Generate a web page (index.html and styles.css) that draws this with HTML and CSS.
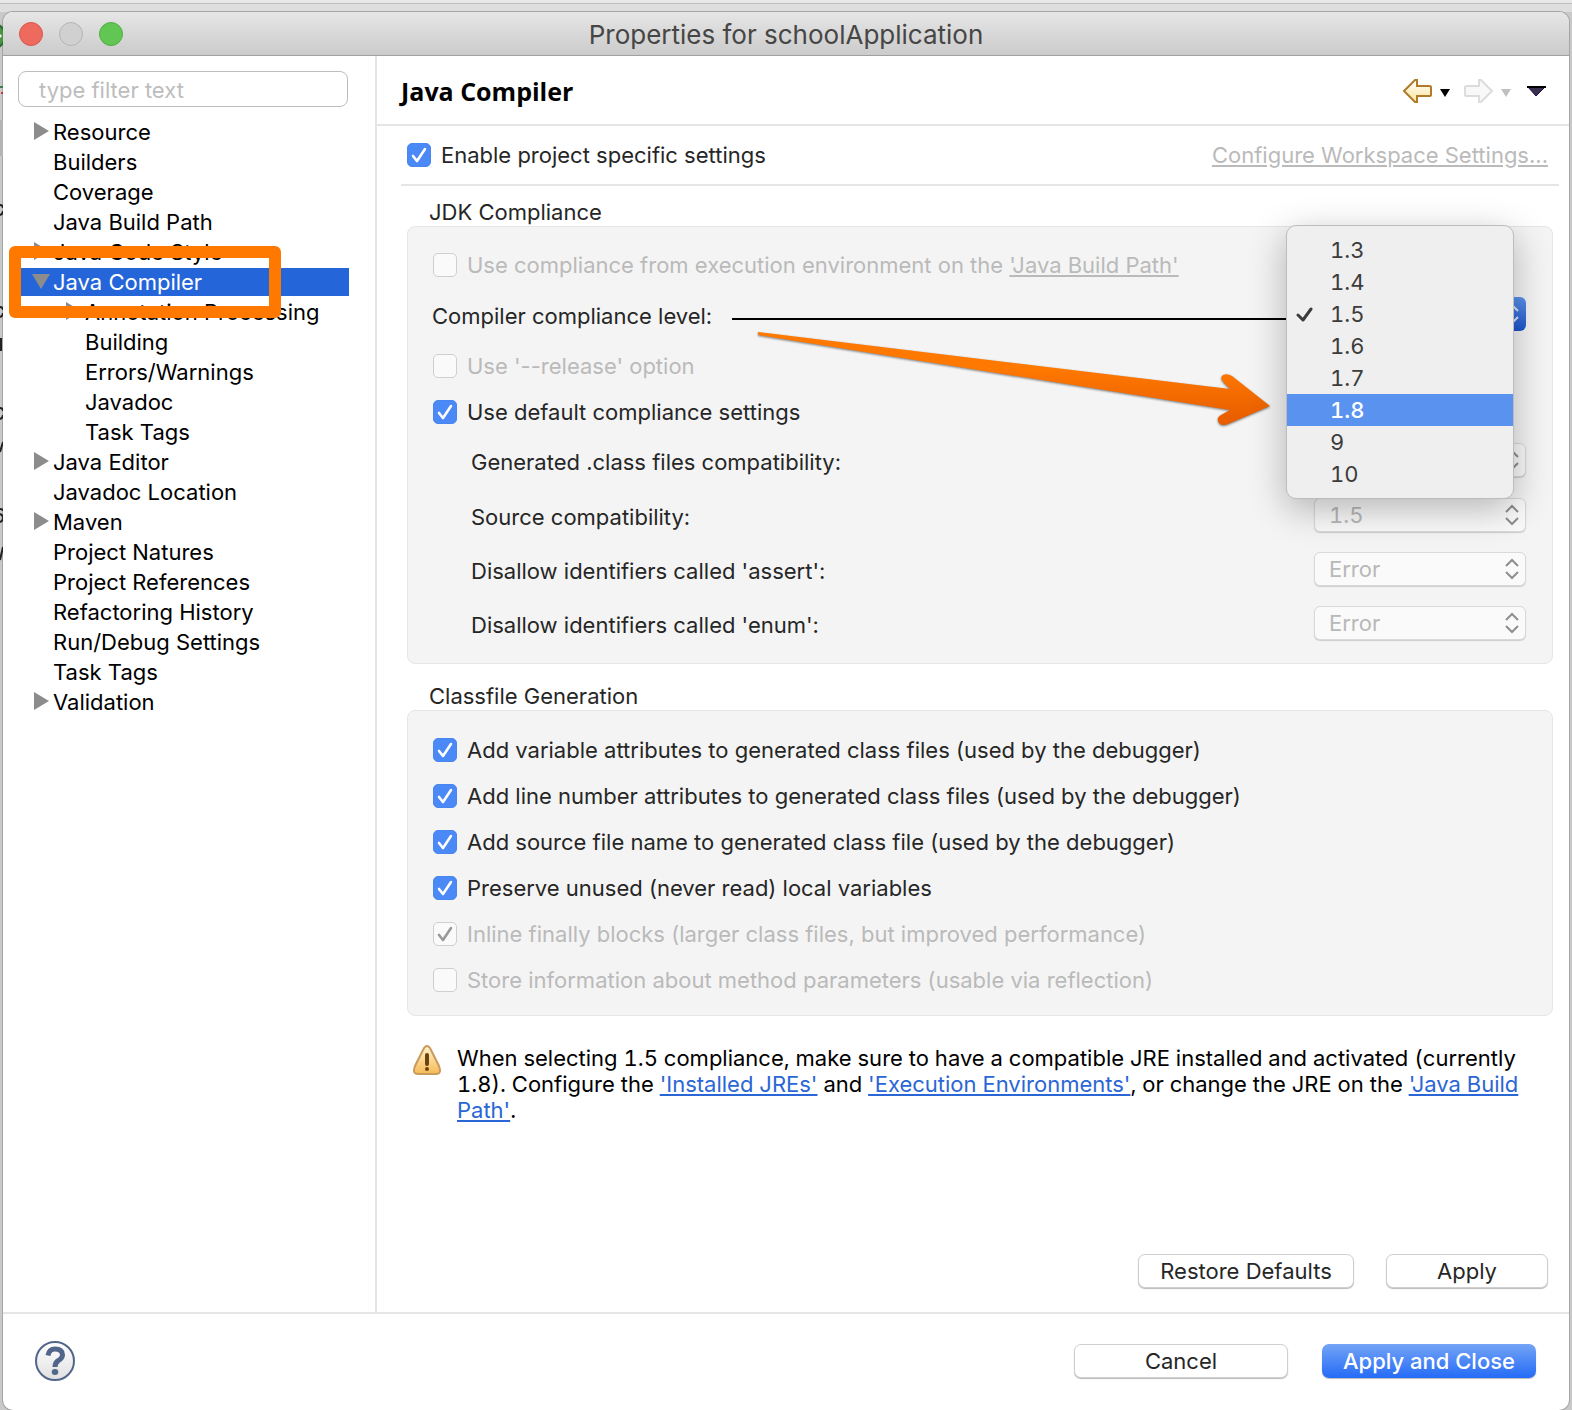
FILE: index.html
```html
<!DOCTYPE html>
<html lang="en">
<head>
<meta charset="utf-8">
<title>Properties for schoolApplication</title>
<link rel="stylesheet" href="styles.css">
</head>
<body>
<svg class="backdrop" width="3" height="600" viewBox="0 0 3 600" aria-hidden="true">
  <path d="M0 120h3v36H0z" fill="#b4b4b4"/>
  <circle cx="-8" cy="36" r="13" fill="#4b9440" stroke="#2b6a35" stroke-width="2"/>
  <path d="M0 34l2 2-2 2z" fill="#fff"/>
  <path d="M0 87h3" stroke="#3c7b50" stroke-width="2"/>
  <path d="M1 93h2" stroke="#c33" stroke-width="2"/>
  <path d="M0 205q3 0 3 3M3 211q0 3-3 4M0 307q3 0 3 3M3 313q0 3-3 4M1 338v13M0 408q3 0 3 3M3 415q0 3-3 4M0 452l3-10M0 509q3 0 3 2M0 514q3 1 3 4t-3 4M0 560l3-13" fill="none" stroke="#222" stroke-width="2"/>
</svg>
<main class="window">
  <header class="titlebar">
    <div class="lights">
      <button class="light red" aria-label="Close"></button>
      <button class="light grey" aria-label="Minimize"></button>
      <button class="light green" aria-label="Zoom"></button>
    </div>
    <h1 class="title">Properties for schoolApplication</h1>
  </header>

  <div class="body">
    <nav class="sidebar">
      <input class="filter" type="text" placeholder="type filter text" aria-label="Filter">
      <ul class="tree">
        <li class="node closed">Resource</li>
        <li class="node">Builders</li>
        <li class="node">Coverage</li>
        <li class="node">Java Build Path</li>
        <li class="node closed">Java Code Style</li>
        <li class="node open selected">Java Compiler<span class="marker"></span></li>
        <li class="node child closed">Annotation Processing</li>
        <li class="node child">Building</li>
        <li class="node child">Errors/Warnings</li>
        <li class="node child">Javadoc</li>
        <li class="node child">Task Tags</li>
        <li class="node closed">Java Editor</li>
        <li class="node">Javadoc Location</li>
        <li class="node closed">Maven</li>
        <li class="node">Project Natures</li>
        <li class="node">Project References</li>
        <li class="node">Refactoring History</li>
        <li class="node">Run/Debug Settings</li>
        <li class="node">Task Tags</li>
        <li class="node closed">Validation</li>
      </ul>
    </nav>

    <section class="page">
      <header class="page-head">
        <h2 class="page-title">Java Compiler</h2>
        <div class="history">
          <button class="tool" aria-label="Back">
            <svg width="50" height="26" viewBox="0 0 50 26">
              <defs><linearGradient id="gold" x1="0" y1="0" x2="0" y2="1"><stop offset="0" stop-color="#fff"/><stop offset="1" stop-color="#fbe49a"/></linearGradient></defs>
              <path d="M2 13 13 2h2v6h12q2 0 2 1v8q0 1-2 1H15v6h-2z" fill="url(#gold)" stroke="#b07a28" stroke-width="2"/>
              <path d="M38 11h10l-5 8z" fill="#000"/>
            </svg>
          </button>
          <button class="tool" aria-label="Forward" disabled>
            <svg width="50" height="26" viewBox="0 0 50 26">
              <path d="M29 13 18 2h-2v6H4q-2 0-2 1v8q0 1 2 1h12v6h2z" fill="#f8f8f8" stroke="#dcdcdc" stroke-width="2"/>
              <path d="M38 11h10l-5 8z" fill="#c0c0c0"/>
            </svg>
          </button>
          <button class="tool view-menu" aria-label="View menu">
            <svg width="20" height="26" viewBox="0 0 20 26">
              <path d="M1 9h17l-9 9z" fill="#3b2f50" stroke="#1c0c48" stroke-width="1"/><path d="M0 9h19" stroke="#000" stroke-width="2"/>
            </svg>
          </button>
        </div>
      </header>

      <div class="content">
        <div class="enable-row">
          <label class="check"><input type="checkbox" checked>Enable project specific settings</label>
          <a class="off-link" href="#workspace">Configure Workspace Settings...</a>
        </div>

        <h3 class="group-title">JDK Compliance</h3>
        <div class="group jdk">
          <div class="line">
            <label class="check off"><input type="checkbox" disabled>Use compliance from execution environment on the</label>&nbsp;<a class="off-link" href="#path">'Java Build Path'</a>
          </div>
          <div class="line level">
            <label for="level">Compiler compliance level:</label>
            <span class="rule"></span>
            <div class="level-box">
              <select id="level" class="active"><option>1.5</option></select>
              <svg class="steps" width="16" height="22" viewBox="0 0 16 22"><path d="M2 8l6-6 6 6M2 14l6 6 6-6" fill="none" stroke="#dfe8fa" stroke-width="2"/></svg>
              <ul class="menu" role="listbox" aria-label="Compiler compliance level">
                <li role="option">1.3</li>
                <li role="option">1.4</li>
                <li role="option" aria-selected="true"><svg class="tick" width="18" height="16" viewBox="0 0 18 16"><path d="M2 9l5 5L15 3" fill="none" stroke="#3c3c3c" stroke-width="3" stroke-linecap="round" stroke-linejoin="round"/></svg>1.5</li>
                <li role="option">1.6</li>
                <li role="option">1.7</li>
                <li role="option" class="hover">1.8</li>
                <li role="option">9</li>
                <li role="option">10</li>
              </ul>
              <svg class="pointer" width="516" height="100" viewBox="0 0 516 100">
                <defs><linearGradient id="flame" x1="0" y1="0" x2="0" y2="1"><stop offset="0.4" stop-color="#ff7800"/><stop offset="1" stop-color="#e65c00"/></linearGradient></defs>
                <path d="M2 1 474 58L468 52Q463 47 467 44Q471 42 476 45L514 75 472 93Q464 96 462 90Q461 86 465 84L474 79L2 4Z" fill="url(#flame)"/>
              </svg>
            </div>
          </div>
          <div class="line release"><label class="check off"><input type="checkbox" disabled>Use '--release' option</label></div>
          <div class="line defaults"><label class="check"><input type="checkbox" checked>Use default compliance settings</label></div>
          <div class="line field">
            <label for="class-files">Generated .class files compatibility:</label>
            <div class="pick"><select id="class-files" disabled><option>1.5</option></select><svg class="steps" width="16" height="22" viewBox="0 0 16 22"><path d="M2 8l6-6 6 6M2 14l6 6 6-6" fill="none" stroke="#8e8e8e" stroke-width="2"/></svg></div>
          </div>
          <div class="line field">
            <label for="source">Source compatibility:</label>
            <div class="pick"><select id="source" disabled><option>1.5</option></select><svg class="steps" width="16" height="22" viewBox="0 0 16 22"><path d="M2 8l6-6 6 6M2 14l6 6 6-6" fill="none" stroke="#8e8e8e" stroke-width="2"/></svg></div>
          </div>
          <div class="line field">
            <label for="assert">Disallow identifiers called 'assert':</label>
            <div class="pick"><select id="assert" disabled><option>Error</option></select><svg class="steps" width="16" height="22" viewBox="0 0 16 22"><path d="M2 8l6-6 6 6M2 14l6 6 6-6" fill="none" stroke="#8e8e8e" stroke-width="2"/></svg></div>
          </div>
          <div class="line field">
            <label for="enum">Disallow identifiers called 'enum':</label>
            <div class="pick"><select id="enum" disabled><option>Error</option></select><svg class="steps" width="16" height="22" viewBox="0 0 16 22"><path d="M2 8l6-6 6 6M2 14l6 6 6-6" fill="none" stroke="#8e8e8e" stroke-width="2"/></svg></div>
          </div>
        </div>

        <h3 class="group-title second">Classfile Generation</h3>
        <div class="group classfile">
          <label class="check"><input type="checkbox" checked>Add variable attributes to generated class files (used by the debugger)</label>
          <label class="check"><input type="checkbox" checked>Add line number attributes to generated class files (used by the debugger)</label>
          <label class="check"><input type="checkbox" checked>Add source file name to generated class file (used by the debugger)</label>
          <label class="check"><input type="checkbox" checked>Preserve unused (never read) local variables</label>
          <label class="check off"><input type="checkbox" checked disabled>Inline finally blocks (larger class files, but improved performance)</label>
          <label class="check off"><input type="checkbox" disabled>Store information about method parameters (usable via reflection)</label>
        </div>

        <div class="notice">
          <svg class="warn" width="28" height="30" viewBox="0 0 28 30">
            <defs><linearGradient id="amber" x1="0" y1="0" x2="0" y2="1"><stop offset="0" stop-color="#fff3d0"/><stop offset="1" stop-color="#f5bb55"/></linearGradient></defs>
            <path d="M11 3q3-4 6 0l9 18q3 8-3 8H5q-6 0-3-8z" fill="url(#amber)" stroke="#c99a5c" stroke-width="2"/>
            <path d="M14 10v9" stroke="#6b4310" stroke-width="4" stroke-linecap="round"/><circle cx="14" cy="24" r="2" fill="#6b4310"/>
          </svg>
          <p class="notice-text">When selecting 1.5 compliance, make sure to have a compatible JRE installed and activated (currently 1.8). Configure the <a href="#jres">'Installed JREs'</a> and <a href="#envs">'Execution Environments'</a>, or change the JRE on the <a href="#path">'Java Build Path'</a>.</p>
        </div>

        <div class="page-actions">
          <button class="btn restore">Restore Defaults</button>
          <button class="btn apply">Apply</button>
        </div>
      </div>
    </section>
  </div>

  <footer class="footer">
    <button class="help" aria-label="Help">
      <svg width="40" height="40" viewBox="0 0 40 40">
        <defs><linearGradient id="pearl" x1="0" y1="0" x2="0" y2="1"><stop offset="0" stop-color="#fff"/><stop offset="1" stop-color="#e0e0e0"/></linearGradient></defs>
        <circle cx="20" cy="20" r="19" fill="url(#pearl)" stroke="#52658a" stroke-width="2"/>
        <path d="M13 14.500q1-6.500 7-6.500 7.500 0 7.500 6 0 3-4 5.500-3.500 2-3.500 6.500" fill="none" stroke="#52658a" stroke-width="5"/>
        <ellipse cx="20" cy="31" rx="3.300" ry="3" fill="#52658a"/>
      </svg>
    </button>
    <div class="footer-actions">
      <button class="btn">Cancel</button>
      <button class="btn primary">Apply and Close</button>
    </div>
  </footer>
</main>
</body>
</html>
```
FILE: styles.css
```css
* { box-sizing: border-box; }
body {
  margin: 0;
  min-height: 100vh;
  display: flex;
  padding: 12px 3px 0;
  background: linear-gradient(#e8e8e8 0 3px, #bdbdbd 3px 4px, #dedede 4px 12px, #c9c9c9 12px);
  font-family: Inter, "Liberation Sans", sans-serif;
  font-size: 22px;
  line-height: 26px;
  color: #262626;
}
button, input, select { font: inherit; color: inherit; }
a { color: #2a66d5; }
.backdrop { position: absolute; left: 0; top: 0; }
.window {
  flex: 1;
  display: flex;
  flex-direction: column;
  background: #fff;
  border-radius: 10px;
  box-shadow: 0 0 0 1px #a5a5a5;
}
.titlebar {
  height: 44px;
  display: grid;
  grid-template-columns: 1fr auto 1fr;
  align-items: center;
  padding: 0 16px;
  border-radius: 10px 10px 0 0;
  border-bottom: 1px solid #a0a0a0;
  background: linear-gradient(#e6e6e6, #cbcbcb);
}
.lights { display: flex; gap: 16px; }
.light { width: 24px; height: 24px; padding: 0; border-radius: 50%; border: 1px solid; }
.red { background: #ee6a5f; border-color: #d9564c; }
.grey { background: #d0d0d0; border-color: #b4b4b4; }
.green { background: #62c655; border-color: #4fad42; }
.title { margin: 2px 0 0; font-size: 26px; line-height: 32px; font-weight: 400; color: #464646; }

.body { flex: 1; display: flex; }
.sidebar { width: 374px; flex: none; padding: 15px 26px 0 15px; border-right: 2px solid #e5e5e5; }
.filter {
  width: 330px; height: 36px; padding: 2px 20px 0;
  border: 1px solid #bdbdbd; border-radius: 8px; background: #fff;
}
.filter::placeholder { color: #bdbdbd; opacity: 1; }
.tree { list-style: none; margin: 10px 0 0; padding: 0; color: #000; }
.node { position: relative; height: 30px; line-height: 30px; padding-left: 35px; white-space: nowrap; }
.child { padding-left: 67px; }
.closed::before, .open::before { content: ""; position: absolute; border: solid transparent; }
.closed::before { left: 16px; top: 5px; border-width: 9px 0 9px 15px; border-left-color: #8c8c8c; }
.child.closed::before { left: 48px; }
.open::before { left: 14px; top: 7px; border-width: 15px 9px 0; border-top-color: #8c8c8c; z-index: 1; }
.selected { color: #fff; background: linear-gradient(#2565da, #2565da) 3px 1px / 100% 28px no-repeat; }
.marker { position: absolute; z-index: 2; left: -9px; top: -21px; width: 272px; height: 72px; border: 12px solid #ff7800; border-radius: 6px; }

.page { flex: 1; display: flex; flex-direction: column; }
.page-head { height: 70px; padding: 2px 22px 0 24px; display: flex; align-items: center; justify-content: space-between; border-bottom: 2px solid #e5e5e5; }
.page-title { margin: 0; font: 700 25px/32px "Open Sans", sans-serif; color: #000; }
.history { display: flex; gap: 11px; }
.tool { padding: 0; border: 0; background: none; display: flex; }
.view-menu { margin-left: 3px; }
.content { flex: 1; display: flex; flex-direction: column; padding: 0 16px 0 30px; }
.enable-row {
  height: 60px; margin: 0 -6px; padding: 0 11px 0 6px;
  display: flex; justify-content: space-between; align-items: center;
  border-bottom: 2px solid #e5e5e5;
}
.check { display: flex; align-items: center; gap: 10px; }
.check input {
  appearance: none; width: 24px; height: 24px; margin: 0; border-radius: 5px;
  border: 1px solid #cfcfcf; background: #fafafa; flex: none;
}
.check input:checked {
  border-color: #4a86f2;
  background: #4a89f6 url("data:image/svg+xml,%3Csvg xmlns='http://www.w3.org/2000/svg' viewBox='0 0 24 24'%3E%3Cpath d='M6 13l4 5 8-12' fill='none' stroke='white' stroke-width='2.6' stroke-linecap='round' stroke-linejoin='round'/%3E%3C/svg%3E") center / 24px;
}
.check input:checked:disabled {
  border-color: #cfcfcf;
  background: #fafafa url("data:image/svg+xml,%3Csvg xmlns='http://www.w3.org/2000/svg' viewBox='0 0 24 24'%3E%3Cpath d='M6 13l4 5 8-12' fill='none' stroke='%23999' stroke-width='2.6' stroke-linecap='round' stroke-linejoin='round'/%3E%3C/svg%3E") center / 24px;
}
.off, .off-link { color: #bababa; }
.group-title { margin: 13px 0 1px 22px; font-size: 22px; line-height: 26px; font-weight: 400; }
.second { margin-top: 19px; }
.group { background: #f4f4f4; border: 1px solid #e6e6e6; border-radius: 8px; }
.group .check { margin-left: 1px; }
.jdk { height: 438px; padding: 13px 26px 0 24px; }
.line { display: flex; align-items: center; height: 50px; }
.level { height: 52px; }
.release { height: 48px; }
.defaults { height: 44px; }
.field { height: 54px; padding-left: 39px; justify-content: space-between; }
.line.field:nth-child(5) { height: 56px; }
.rule { flex: 1; height: 2px; margin-left: 20px; margin-top: 6px; background: #000; }
.level-box, .pick { position: relative; width: 212px; height: 34px; margin-bottom: 4px; }
.level-box { width: 240px; }
select {
  appearance: none; width: 212px; height: 34px; padding: 0 14px; border-radius: 6px;
  border: 1px solid #d9d9d9; background: #fafafa; display: block; opacity: 1;
  font-variant-numeric: tabular-nums;
}
select:disabled { color: #b8b8b8; opacity: 1; box-shadow: 0 1px 1px #ccc; }
.active { margin-left: auto; border: 0; background: linear-gradient(#5c92ee, #1c55cc); }
.steps { position: absolute; right: 6px; top: 6px; }
.menu {
  position: absolute; z-index: 3; left: 0; top: -72px; width: 228px; height: 274px;
  margin: 0; padding: 8px 0; list-style: none; color: #3c3c3c;
  background: #efefef; border: 1px solid #bcbcbc; border-radius: 10px;
  box-shadow: 0 10px 36px rgba(0,0,0,.28);
  font-variant-numeric: tabular-nums;
}
.menu li { position: relative; height: 32px; line-height: 32px; padding-left: 43px; }
.menu .hover { background: #5a92f0; color: #fff; font-weight: 500; }
.tick { position: absolute; left: 9px; top: 8px; }
.pointer { position: absolute; z-index: 2; right: 254px; top: 34px; filter: drop-shadow(0 1px 1px rgba(0,0,0,.5)); }
.classfile { padding: 16px 24px 12px; display: flex; flex-direction: column; }
.classfile .check { height: 46px; }
.notice { display: flex; gap: 16px; margin: 29px 10px 0 6px; }
.warn { flex: none; }
.notice-text { margin: 0; color: #000; font-variant-numeric: tabular-nums; }
.page-actions { margin-top: auto; padding: 0 5px 24px; display: flex; justify-content: flex-end; gap: 32px; }
.btn { height: 34px; padding: 0 18px; background: #fff; border: 1px solid #cfcfcf; border-radius: 7px; box-shadow: 0 1px 1px #bbb; white-space: nowrap; }
.restore { width: 216px; }
.apply { width: 162px; }
.footer { height: 98px; border-top: 2px solid #e5e5e5; display: flex; justify-content: space-between; align-items: center; padding: 0 33px 2px 32px; }
.help { padding: 0; border: 0; background: none; display: flex; }
.footer-actions { display: flex; gap: 34px; }
.footer .btn { width: 214px; }
.footer .primary { color: #fff; border: 0; background: linear-gradient(#74a4f6, #246bf6); font-weight: 500; }
```
